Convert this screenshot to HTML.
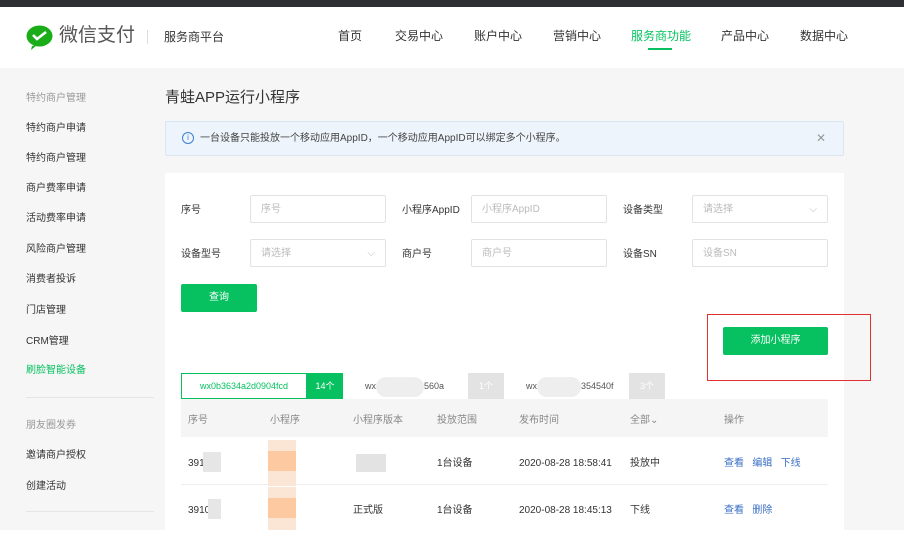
<!DOCTYPE html>
<html><head><meta charset="utf-8"><style>
*{margin:0;padding:0;box-sizing:border-box}
body{width:904px;height:539px;overflow:hidden;background:#f6f6f6;font-family:"Liberation Sans","Noto Sans CJK SC",sans-serif;font-size:10px;color:#333;position:relative}
.a{position:absolute;white-space:nowrap;line-height:1.2}
.top{left:0;top:0;width:904px;height:7px;background:#2e2f33}
.hdr{left:0;top:7px;width:904px;height:61px;background:#fff}
.nav{top:29px;font-size:12px;color:#333}
.side,.lbl,.th,.r1,.r2{transform:translateY(2px)}
.side{font-size:10px;color:#333}
.card{left:165px;top:173px;width:679px;height:366px;background:#fff}
.lbl{font-size:10px;color:#333}
.inp{width:136px;height:28px;border:1px solid #e2e2e2;border-radius:2px;background:#fff;color:#bbb;font-size:10px;padding:8px 10px}
.btn{background:#07c160;color:#fff;font-size:10px;text-align:center;border-radius:2px}
.th{top:413px;color:#888}
.r1{top:456px}.r2{top:503px}
.lnk{color:#3a6ec4}
</style></head><body>
<div class="a top"></div>
<div class="a hdr"></div>
<svg class="a" style="left:26px;top:25px" width="27" height="25" viewBox="0 0 27 25"><ellipse cx="13.5" cy="11" rx="13" ry="10.5" fill="#1aad19"/><path d="M6 21 L5 25 L11 20Z" fill="#1aad19"/><path d="M7 10 L11 14 L20 7" stroke="#fff" stroke-width="2.6" fill="none"/></svg>
<div class="a" style="left:59px;top:25px;font-size:19px;color:#555">微信支付</div>
<div class="a" style="left:147px;top:30px;width:1px;height:14px;background:#ddd"></div>
<div class="a" style="left:164px;top:30px;font-size:12px;color:#333">服务商平台</div>
<div class="a nav" style="left:338px">首页</div>
<div class="a nav" style="left:395px">交易中心</div>
<div class="a nav" style="left:474px">账户中心</div>
<div class="a nav" style="left:553px">营销中心</div>
<div class="a nav" style="left:631px;color:#07c160">服务商功能</div>
<div class="a" style="left:648px;top:48px;width:24px;height:2px;background:#07c160"></div>
<div class="a nav" style="left:721px">产品中心</div>
<div class="a nav" style="left:800px">数据中心</div>

<div class="a side" style="left:26px;top:91px;color:#999">特约商户管理</div>
<div class="a side" style="left:26px;top:121px">特约商户申请</div>
<div class="a side" style="left:26px;top:151px">特约商户管理</div>
<div class="a side" style="left:26px;top:181px">商户费率申请</div>
<div class="a side" style="left:26px;top:211px">活动费率申请</div>
<div class="a side" style="left:26px;top:242px">风险商户管理</div>
<div class="a side" style="left:26px;top:272px">消费者投诉</div>
<div class="a side" style="left:26px;top:303px">门店管理</div>
<div class="a side" style="left:26px;top:334px">CRM管理</div>
<div class="a side" style="left:26px;top:363px;color:#07c160">刷脸智能设备</div>
<div class="a" style="left:26px;top:397px;width:128px;height:1px;background:#e5e5e5"></div>
<div class="a side" style="left:26px;top:418px;color:#999">朋友圈发券</div>
<div class="a side" style="left:26px;top:448px">邀请商户授权</div>
<div class="a side" style="left:26px;top:479px">创建活动</div>
<div class="a" style="left:26px;top:511px;width:128px;height:1px;background:#e5e5e5"></div>

<div class="a" style="left:165px;top:89px;font-size:15px;color:#333">青蛙APP运行小程序</div>
<div class="a" style="left:165px;top:121px;width:679px;height:35px;background:#eef4fb;border:1px solid #dbe6f3;border-radius:2px"></div>
<div class="a" style="left:182px;top:132px;width:12px;height:12px;border:1px solid #3a7fd5;border-radius:50%;color:#3a7fd5;font-size:8px;text-align:center;line-height:10px">i</div>
<div class="a" style="left:200px;top:133px;font-size:10px;color:#444">一台设备只能投放一个移动应用AppID，一个移动应用AppID可以绑定多个小程序。</div>
<div class="a" style="left:816px;top:131px;font-size:12px;color:#999">✕</div>

<div class="a card"></div>
<div class="a lbl" style="left:181px;top:203px">序号</div>
<div class="a inp" style="left:250px;top:195px">序号</div>
<div class="a lbl" style="left:402px;top:203px">小程序AppID</div>
<div class="a inp" style="left:471px;top:195px">小程序AppID</div>
<div class="a lbl" style="left:623px;top:203px">设备类型</div>
<div class="a inp" style="left:692px;top:195px">请选择<span style="float:right;color:#bbb">⌵</span></div>
<div class="a lbl" style="left:181px;top:247px">设备型号</div>
<div class="a inp" style="left:250px;top:239px">请选择<span style="float:right;color:#bbb">⌵</span></div>
<div class="a lbl" style="left:402px;top:247px">商户号</div>
<div class="a inp" style="left:471px;top:239px">商户号</div>
<div class="a lbl" style="left:623px;top:247px">设备SN</div>
<div class="a inp" style="left:692px;top:239px">设备SN</div>
<div class="a btn" style="left:181px;top:284px;width:76px;height:28px;line-height:28px">查询</div>
<div class="a" style="left:707px;top:314px;width:164px;height:67px;border:1px solid #e03030"></div>
<div class="a btn" style="left:723px;top:327px;width:105px;height:28px;line-height:28px">添加小程序</div>

<div class="a" style="left:181px;top:373px;width:126px;height:26px;border:1px solid #07c160;color:#07c160;font-size:9px;text-align:center;line-height:24px">wx0b3634a2d0904fcd</div>
<div class="a" style="left:307px;top:373px;width:36px;height:26px;background:#07c160;color:#fff;font-size:9px;text-align:center;line-height:26px">14个</div>
<div class="a" style="left:343px;top:373px;width:125px;height:26px;background:#fff;color:#555;font-size:9px;line-height:26px;padding-left:22px">wx<span style="display:inline-block;width:48px;height:20px;background:#eee;vertical-align:middle;border-radius:10px"></span>560a</div>
<div class="a" style="left:468px;top:373px;width:36px;height:26px;background:#e3e3e3;color:#fff;font-size:9px;text-align:center;line-height:26px">1个</div>
<div class="a" style="left:504px;top:373px;width:125px;height:26px;background:#fff;color:#555;font-size:9px;line-height:26px;padding-left:22px">wx<span style="display:inline-block;width:44px;height:20px;background:#eee;vertical-align:middle;border-radius:10px"></span>354540f</div>
<div class="a" style="left:629px;top:373px;width:36px;height:26px;background:#e3e3e3;color:#fff;font-size:9px;text-align:center;line-height:26px">3个</div>

<div class="a" style="left:181px;top:399px;width:647px;height:38px;background:#f5f5f5"></div>
<div class="a th" style="left:188px">序号</div>
<div class="a th" style="left:270px">小程序</div>
<div class="a th" style="left:353px">小程序版本</div>
<div class="a th" style="left:437px">投放范围</div>
<div class="a th" style="left:519px">发布时间</div>
<div class="a th" style="left:630px">全部⌄</div>
<div class="a th" style="left:724px">操作</div>
<div class="a" style="left:181px;top:484px;width:647px;height:1px;background:#eee"></div>

<div class="a r1" style="left:188px">391</div>
<div class="a" style="left:203px;top:452px;width:18px;height:20px;background:#e6e6e6"></div>
<div class="a" style="left:268px;top:440px;width:28px;height:46px;background:#fbe6d6"></div>
<div class="a" style="left:268px;top:451px;width:28px;height:20px;background:#fcc9a0"></div>
<div class="a" style="left:268px;top:487px;width:28px;height:45px;background:#fbe6d6"></div>
<div class="a" style="left:268px;top:498px;width:28px;height:20px;background:#fcc9a0"></div>
<div class="a" style="left:356px;top:454px;width:30px;height:18px;background:#e3e3e3"></div>
<div class="a r1" style="left:437px">1台设备</div>
<div class="a r1" style="left:519px">2020-08-28 18:58:41</div>
<div class="a r1" style="left:630px">投放中</div>
<div class="a r1 lnk" style="left:724px">查看&nbsp;&nbsp; 编辑&nbsp;&nbsp; 下线</div>

<div class="a r2" style="left:188px">3910</div>
<div class="a" style="left:208px;top:499px;width:13px;height:20px;background:#e6e6e6"></div>
<div class="a r2" style="left:353px">正式版</div>
<div class="a r2" style="left:437px">1台设备</div>
<div class="a r2" style="left:519px">2020-08-28 18:45:13</div>
<div class="a r2" style="left:630px">下线</div>
<div class="a r2 lnk" style="left:724px">查看&nbsp;&nbsp; 删除</div>
<div class="a" style="left:0;top:530px;width:904px;height:9px;background:#fff"></div>
</body></html>
